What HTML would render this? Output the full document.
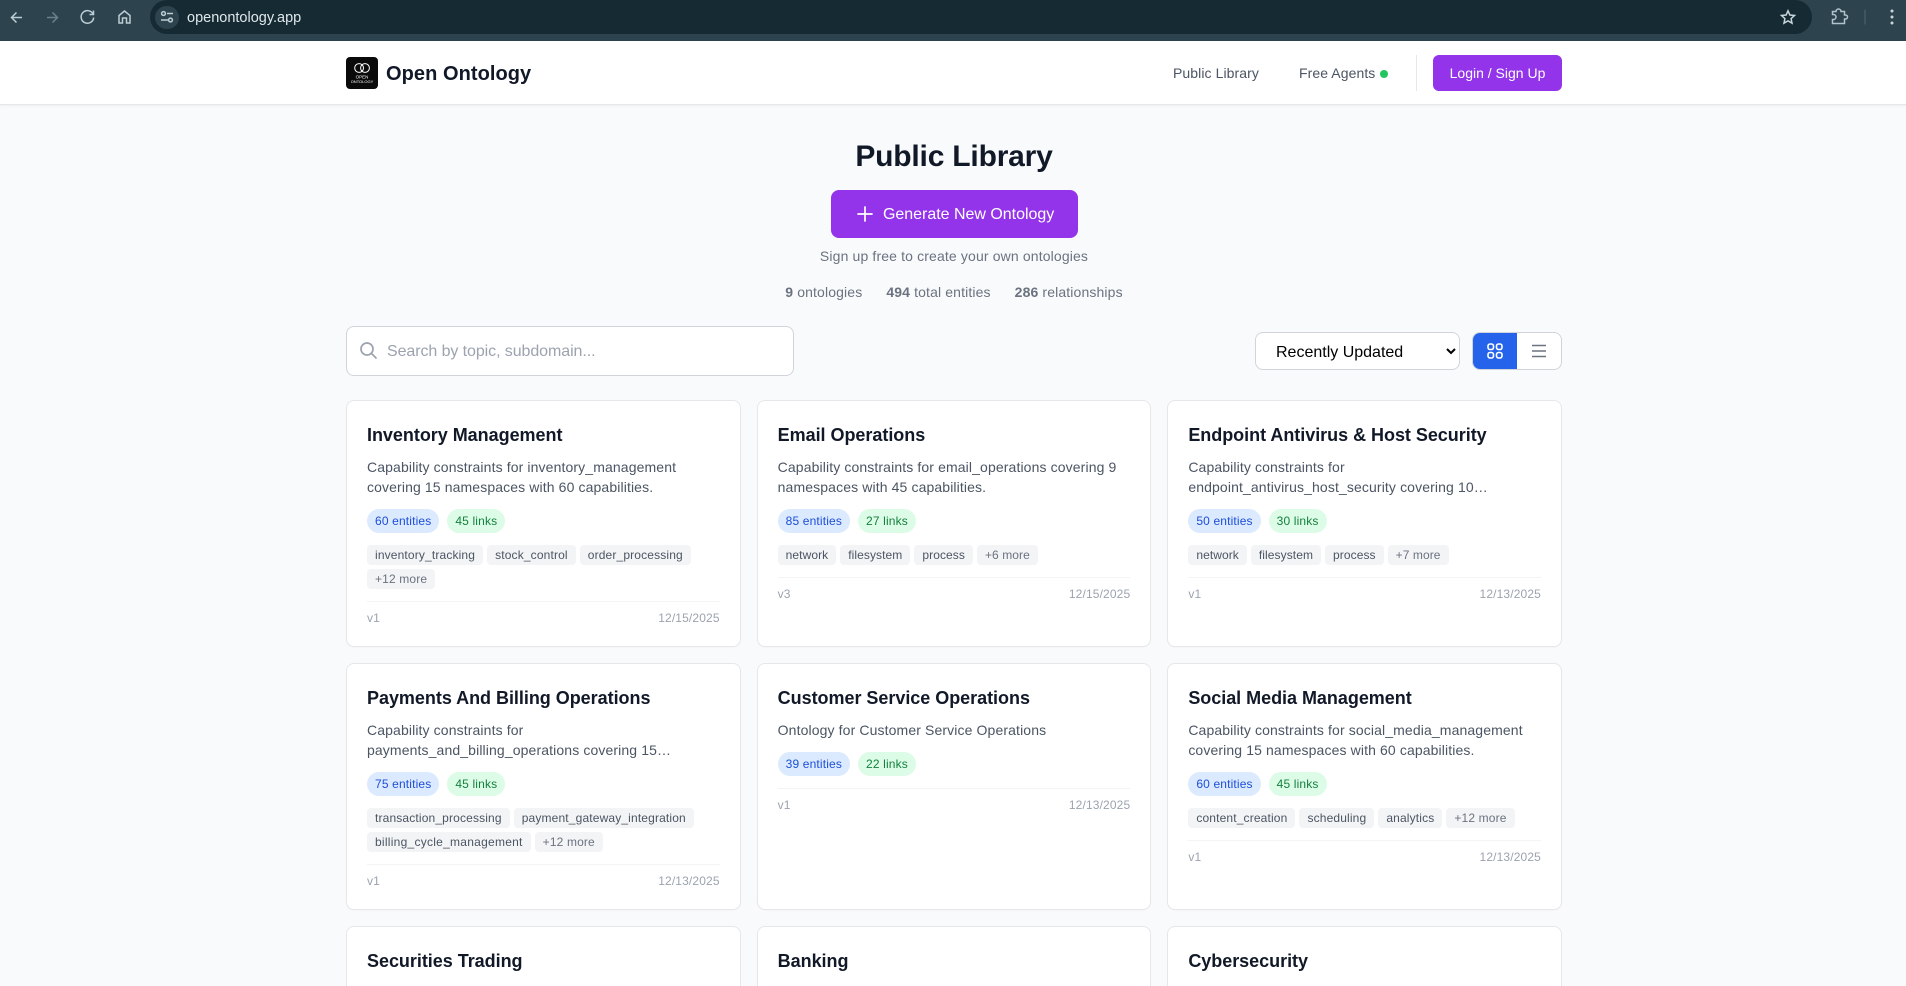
<!DOCTYPE html>
<html lang="en">
<head>
<meta charset="utf-8">
<title>Open Ontology - Public Library</title>
<style>
*{box-sizing:border-box;margin:0;padding:0}
html,body{width:1906px;height:986px;overflow:hidden;background:#f9fafb;font-family:"Liberation Sans",sans-serif;color:#111827}
#root{position:relative;width:1906px;height:986px;overflow:hidden}
.abs{position:absolute}
#chrome{position:absolute;left:0;top:0;width:1906px;height:41px;background:#2d434d}
#url{position:absolute;left:150px;top:0;width:1662px;height:34px;background:#162a33;border-radius:17px}
#tune{position:absolute;left:155px;top:6px;width:24px;height:23px;border-radius:12px;background:#2d434d}
#urltext{position:absolute;left:187px;top:10px;font-size:14.5px;line-height:17px;color:#dfe7ea;white-space:nowrap}
#nav{position:absolute;left:0;top:41px;width:1906px;height:64px;background:#fff;border-bottom:1px solid #e5e7eb;box-shadow:0 1px 2px rgba(0,0,0,.05)}
#logo{position:absolute;left:346px;top:57px;width:32px;height:32px;border-radius:4px;background:#0a0a0a}
#brand{position:absolute;left:386px;top:60px;font-size:20px;line-height:28px;font-weight:700;color:#111827;white-space:nowrap;letter-spacing:.06px}
.navl{position:absolute;top:63px;font-size:14px;line-height:20px;color:#4b5563;white-space:nowrap;letter-spacing:.08px}
#dot{position:absolute;left:1380px;top:70px;width:8px;height:8px;border-radius:50%;background:#22c55e}
#divd{position:absolute;left:1416px;top:55px;width:1px;height:36px;background:#e5e7eb}
#login{position:absolute;left:1433px;top:55px;width:129px;height:36px;border-radius:6px;background:#9333ea;color:#fff;font-size:14px;line-height:36px;text-align:center;white-space:nowrap}
h1{position:absolute;left:346px;width:1216px;top:139px;text-align:center;font-size:30px;line-height:36px;font-weight:700;color:#111827;letter-spacing:-.2px}
#gen{position:absolute;left:831px;top:190px;width:247px;height:48px;background:#9333ea;border-radius:8px;color:#fff;font-size:16px;line-height:48px;white-space:nowrap}
#gen span{position:absolute;left:52px;top:1px;letter-spacing:-.02px}
#gen svg{position:absolute;left:24px;top:14px}
#sub{position:absolute;left:346px;width:1216px;top:246px;text-align:center;font-size:14px;line-height:20px;color:#6b7280;letter-spacing:.14px}
#stats{position:absolute;left:346px;width:1216px;top:282px;display:flex;justify-content:center;gap:24px;font-size:14px;line-height:20px;color:#6b7280;letter-spacing:.13px}
#stats b{font-weight:700}
#search{position:absolute;left:346px;top:326px;width:448px;height:50px;background:#fff;border:1px solid #d1d5db;border-radius:8px}
#search span{position:absolute;left:40px;top:15px;font-size:16px;line-height:20px;color:#9ca3af;white-space:nowrap;letter-spacing:-.08px}
#search svg{position:absolute;left:12px;top:14px}
select{position:absolute;left:1255px;top:332px;width:205px;height:38px;background:#fff;border:1px solid #d1d5db;border-radius:8px;font-family:"Liberation Sans",sans-serif;font-size:16px;padding:2px 16px 0;color:#000;outline:none}
#toggle{position:absolute;left:1472px;top:332px;width:90px;height:38px;border:1px solid #d1d5db;border-radius:8px;overflow:hidden;background:#fff}
#toggle i{position:absolute;left:0;top:0;width:44px;height:36px;background:#2563eb}
#toggle svg{position:absolute;top:9px}
#grid{position:absolute;left:346px;top:400px;width:1216px;height:586px;display:grid;grid-template-columns:repeat(3,394.67px);column-gap:16px;row-gap:16px;grid-template-rows:247px 247px 60px}
.card{background:#fff;border:1px solid #e5e7eb;border-radius:8px;padding:20px;box-shadow:0 1px 1px rgba(0,0,0,.02);overflow:hidden}
.card.cut{border-bottom:none;border-radius:8px 8px 0 0;box-shadow:none}
.card h3{font-size:18px;line-height:28px;font-weight:700;color:#111827;margin-bottom:8px;white-space:nowrap;letter-spacing:-.03px}
.card p{font-size:14px;line-height:20px;color:#4b5563;margin-bottom:12px;white-space:nowrap;letter-spacing:.12px}
.bd{display:flex;gap:8px;margin-bottom:12px}
.bd span{font-size:12px;line-height:16px;padding:4px 8px;border-radius:12px;white-space:nowrap;letter-spacing:.15px}
.en{background:#dbeafe;color:#1d4ed8}
.li{background:#dcfce7;color:#15803d}
.tg{display:flex;flex-wrap:wrap;gap:4px;margin-bottom:12px}
.tg span{font-size:12px;line-height:16px;padding:2px 8px;border-radius:4px;background:#f3f4f6;color:#4b5563;white-space:nowrap;letter-spacing:.15px}
.tg.s span{letter-spacing:.08px}
.tg span.w{letter-spacing:.26px}
.tg span.m{color:#6b7280}
.ft{border-top:1px solid #f3f4f6;padding-top:8px;display:flex;justify-content:space-between;font-size:12px;line-height:16px;color:#9ca3af;letter-spacing:.14px}
</style>
</head>
<body>
<div id="root">
<div id="chrome"></div>
<div id="url"></div>
<div id="tune"></div>
<svg class="abs" style="left:0;top:0" width="200" height="34" fill="none" stroke="#bccdd4" stroke-width="1.500">
  <path d="M22 17.500H11.500M16.500 12.500 11.500 17.500l5 5"/>
  <path d="M47 17.500h10.500M52.500 12.500l5 5-5 5" stroke="#6c808a"/>
  <path d="M93 14a6.300 6.300 0 1 0 .7 3.500M93.500 10.500v4h-4"/>
  <path d="M119 23v-7.500l5.500-4.500 5.500 4.500V23h-3.500v-5h-4v5z"/>
  <circle cx="163.500" cy="13.500" r="1.900"/><path d="M167 13.500h6"/>
  <circle cx="170.500" cy="20" r="1.900"/><path d="M161 20h7"/>
</svg>
<svg class="abs" style="left:1770px;top:0" width="136" height="34" fill="none" stroke="#c9d6db" stroke-width="1.500">
  <path d="M18 10.800l1.900 4.200 4.600.5-3.400 3.100.9 4.600-4-2.300-4 2.300.9-4.600-3.400-3.100 4.600-.5z"/>
  <path d="M62.500 11.500H66a2.500 2.500 0 0 1 5 0h3.500V15h1a2 2 0 0 1 0 4h-1v4.500h-12V19.500h1a2.500 2.500 0 0 0 0-5h-1z" stroke="#b0c3cb"/>
  <path d="M95 9.500v15" stroke="#4f656f" stroke-width="1"/>
  <circle cx="122" cy="11" r="1.500" fill="#c9d6db" stroke="none"/><circle cx="122" cy="17" r="1.500" fill="#c9d6db" stroke="none"/><circle cx="122" cy="23" r="1.500" fill="#c9d6db" stroke="none"/>
</svg>
<div id="urltext">openontology.app</div>

<div id="nav"></div>
<div id="logo">
  <svg width="32" height="32" fill="none">
    <circle cx="13.100" cy="11" r="4.400" stroke="#fff" stroke-width="1"/>
    <circle cx="19" cy="11" r="4.400" stroke="#fff" stroke-width="1"/>
    <text x="16" y="21.500" text-anchor="middle" font-family="Liberation Sans" font-size="4.500" fill="#fff">OPEN</text>
    <text x="16" y="25.800" text-anchor="middle" font-family="Liberation Sans" font-size="4" fill="#fff">ONTOLOGY</text>
  </svg>
</div>
<div id="brand">Open Ontology</div>
<div class="navl" style="left:1173px">Public Library</div>
<div class="navl" style="left:1299px">Free Agents</div>
<div id="dot"></div>
<div id="divd"></div>
<div id="login">Login / Sign Up</div>

<h1>Public Library</h1>
<div id="gen">
  <svg width="20" height="20" fill="none" stroke="#fff" stroke-width="1.700" stroke-linecap="round"><path d="M10 3v14M3 10h14"/></svg>
  <span>Generate New Ontology</span>
</div>
<div id="sub">Sign up free to create your own ontologies</div>
<div id="stats">
  <div><b>9</b> ontologies</div>
  <div><b>494</b> total entities</div>
  <div><b>286</b> relationships</div>
</div>

<div id="search">
  <svg width="20" height="20" fill="none" stroke="#9ca3af" stroke-width="1.700" stroke-linecap="round"><circle cx="8" cy="8" r="6"/><path d="M12.500 12.500 17 17"/></svg>
  <span>Search by topic, subdomain...</span>
</div>
<select><option>Recently Updated</option></select>
<div id="toggle">
  <i></i>
  <svg style="left:13px" width="18" height="18" fill="none" stroke="#fff" stroke-width="1.600"><rect x="2" y="2" width="5.500" height="5.500" rx="2"/><rect x="10.500" y="2" width="5.500" height="5.500" rx="2"/><rect x="2" y="10.500" width="5.500" height="5.500" rx="2"/><rect x="10.500" y="10.500" width="5.500" height="5.500" rx="2"/></svg>
  <svg style="left:57px" width="18" height="18" fill="none" stroke="#6b7280" stroke-width="1.600"><path d="M2 3.500h14M2 9h14M2 14.500h14"/></svg>
</div>

<div id="grid">
  <div class="card">
    <h3>Inventory Management</h3>
    <p>Capability constraints for inventory_management<br>covering 15 namespaces with 60 capabilities.</p>
    <div class="bd"><span class="en">60 entities</span><span class="li">45 links</span></div>
    <div class="tg"><span>inventory_tracking</span><span>stock_control</span><span>order_processing</span><span class="m">+12 more</span></div>
    <div class="ft"><span>v1</span><span>12/15/2025</span></div>
  </div>
  <div class="card">
    <h3>Email Operations</h3>
    <p>Capability constraints for email_operations covering 9<br>namespaces with 45 capabilities.</p>
    <div class="bd"><span class="en">85 entities</span><span class="li">27 links</span></div>
    <div class="tg s"><span>network</span><span>filesystem</span><span>process</span><span class="m">+6 more</span></div>
    <div class="ft"><span>v3</span><span>12/15/2025</span></div>
  </div>
  <div class="card">
    <h3>Endpoint Antivirus &amp; Host Security</h3>
    <p>Capability constraints for<br>endpoint_antivirus_host_security covering 10…</p>
    <div class="bd"><span class="en">50 entities</span><span class="li">30 links</span></div>
    <div class="tg s"><span>network</span><span>filesystem</span><span>process</span><span class="m">+7 more</span></div>
    <div class="ft"><span>v1</span><span>12/13/2025</span></div>
  </div>
  <div class="card">
    <h3>Payments And Billing Operations</h3>
    <p>Capability constraints for<br>payments_and_billing_operations covering 15…</p>
    <div class="bd"><span class="en">75 entities</span><span class="li">45 links</span></div>
    <div class="tg"><span>transaction_processing</span><span>payment_gateway_integration</span><span class="w">billing_cycle_management</span><span class="m">+12 more</span></div>
    <div class="ft"><span>v1</span><span>12/13/2025</span></div>
  </div>
  <div class="card">
    <h3>Customer Service Operations</h3>
    <p>Ontology for Customer Service Operations</p>
    <div class="bd"><span class="en">39 entities</span><span class="li">22 links</span></div>
    <div class="ft"><span>v1</span><span>12/13/2025</span></div>
  </div>
  <div class="card">
    <h3>Social Media Management</h3>
    <p>Capability constraints for social_media_management<br>covering 15 namespaces with 60 capabilities.</p>
    <div class="bd"><span class="en">60 entities</span><span class="li">45 links</span></div>
    <div class="tg"><span>content_creation</span><span>scheduling</span><span>analytics</span><span class="m">+12 more</span></div>
    <div class="ft"><span>v1</span><span>12/13/2025</span></div>
  </div>
  <div class="card cut"><h3>Securities Trading</h3></div>
  <div class="card cut"><h3>Banking</h3></div>
  <div class="card cut"><h3>Cybersecurity</h3></div>
</div>
</div>
</body>
</html>
